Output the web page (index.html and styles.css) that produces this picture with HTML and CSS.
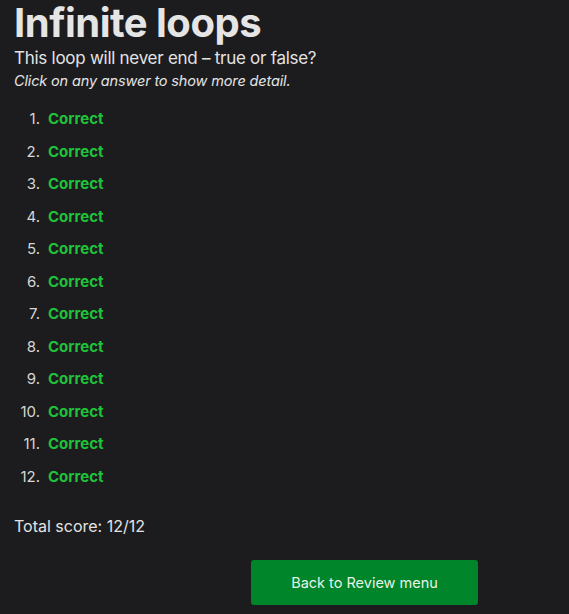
FILE: index.html
```html
<!DOCTYPE html>
<html>
<head>
<meta charset="utf-8">
<link rel="stylesheet" href="styles.css">
</head>
<body>
<main class="page">
  <h1 class="title">Infinite loops</h1>
  <p class="subtitle">This loop will never end – true or false?</p>
  <p class="hint">Click on any answer to show more detail.</p>
  <ol class="answers">
    <li><span class="ok">Correct</span></li>
    <li><span class="ok">Correct</span></li>
    <li><span class="ok">Correct</span></li>
    <li><span class="ok">Correct</span></li>
    <li><span class="ok">Correct</span></li>
    <li><span class="ok">Correct</span></li>
    <li><span class="ok">Correct</span></li>
    <li><span class="ok">Correct</span></li>
    <li><span class="ok">Correct</span></li>
    <li><span class="ok">Correct</span></li>
    <li><span class="ok">Correct</span></li>
    <li><span class="ok">Correct</span></li>
  </ol>
  <p class="score">Total score: 12/12</p>
  <div class="actions">
    <button class="back">Back to Review menu</button>
  </div>
</main>
</body>
</html>
```
FILE: styles.css
```css
html, body {
  margin: 0;
  padding: 0;
  background: #1c1c1e;
}
body {
  font-family: Inter, "Noto Sans", sans-serif;
  color: #e3e3e3;
}
.page {
  padding: 0 14px;
}
.title {
  margin: 0;
  font-size: 40px;
  font-weight: 700;
  line-height: 46px;
  letter-spacing: -0.5px;
  color: #e5e5e5;
}
.subtitle {
  margin: 0;
  font-size: 17px;
  line-height: 24px;
  letter-spacing: -0.27px;
}
.hint {
  margin: 1px 0 0 0;
  font-size: 14.5px;
  font-style: italic;
  line-height: 20px;
  letter-spacing: -0.15px;
}
.answers {
  margin: 12px 0 0 0;
  padding: 0;
  list-style: none;
  counter-reset: item;
  font-size: 15px;
  line-height: 32.5px;
}
.answers li {
  display: flex;
  gap: 8px;
  counter-increment: item;
}
.answers li::before {
  content: counter(item) ".";
  width: 26px;
  text-align: right;
  color: #d6d6d6;
}
.ok {
  color: #1fc23a;
  font-weight: 700;
}
.score {
  margin: 22px 0 0 0;
  font-size: 16px;
  line-height: 22px;
}
.actions {
  display: flex;
  margin-top: 23px;
  padding-left: 237px;
}
.back {
  width: 227px;
  height: 45px;
  border: none;
  border-radius: 3px;
  background: #00852a;
  color: #e6f2e8;
  font-family: Inter, "Noto Sans", sans-serif;
  font-size: 14.5px;
}
```
